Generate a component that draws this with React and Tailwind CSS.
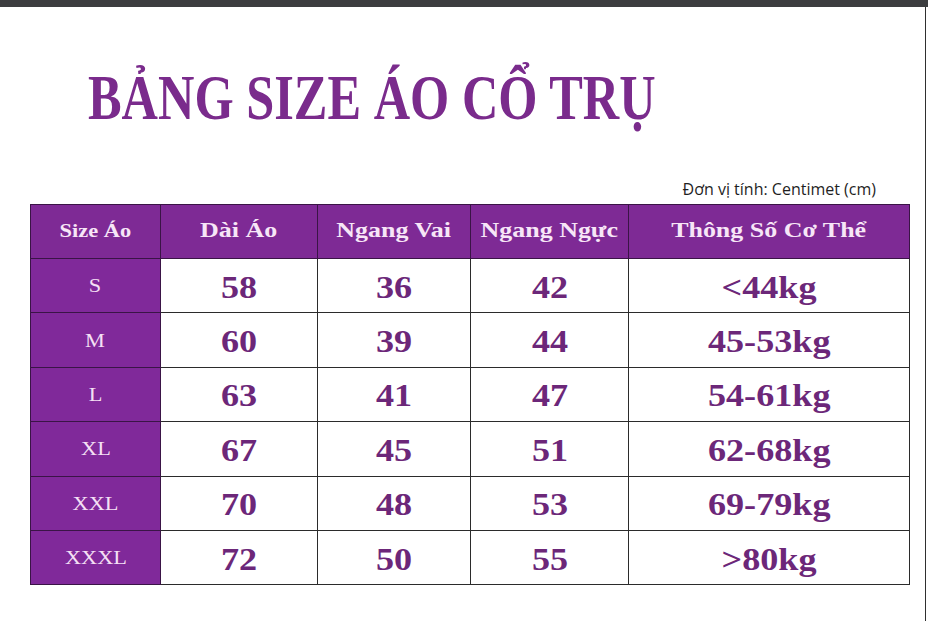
import React from "react";

const rows = [
  { size: "S", dai: "58", vai: "36", nguc: "42", body: "<44kg" },
  { size: "M", dai: "60", vai: "39", nguc: "44", body: "45-53kg" },
  { size: "L", dai: "63", vai: "41", nguc: "47", body: "54-61kg" },
  { size: "XL", dai: "67", vai: "45", nguc: "51", body: "62-68kg" },
  { size: "XXL", dai: "70", vai: "48", nguc: "53", body: "69-79kg" },
  { size: "XXXL", dai: "72", vai: "50", nguc: "55", body: ">80kg" },
];

const serif = { fontFamily: '"Liberation Serif", "Times New Roman", serif' };

function Head({ children, small }) {
  return (
    <th className="border border-[#3a1446] bg-[#7e2a95] p-0 text-center align-middle">
      <span
        className={`inline-block scale-x-[1.18] font-bold leading-none text-[#f7e6f7] ${small ? "text-[19px]" : "text-[22px]"}`}
      >
        {children}
      </span>
    </th>
  );
}

function Num({ children }) {
  return (
    <td className="border border-[#2b2b2b] bg-white p-0 pt-1 text-center align-middle">
      <span className="inline-block scale-x-[1.13] text-[32px] font-bold leading-none text-[#6c2779]">
        {children}
      </span>
    </td>
  );
}

export default function App() {
  return (
    <div className="min-h-[621px] bg-white" style={serif}>
      <div className="h-[7px] bg-[#3c3d3f]" />
      <div className="w-[926px] min-h-[614px] border-r border-[#2f2f2f]">
        {/* Title */}
        <div className="pl-[88px] pt-[60px]">
          <h1 className="inline-block origin-left scale-x-[0.8] whitespace-nowrap text-[63px] font-bold leading-none text-[#7a2b8c]">
            BẢNG SIZE ÁO CỔ TRỤ
          </h1>
        </div>

        {/* Unit */}
        <div className="mt-[49px] flex justify-end pr-[49px]">
          <span
            className="text-[16px] leading-5 text-[#1f1f1f]"
            style={{ fontFamily: '"Open Sans", "Noto Sans", sans-serif' }}
          >
            Đơn vị tính: Centimet (cm)
          </span>
        </div>

        {/* Table */}
        <table className="ml-[30px] mt-[5px] w-[879px] table-fixed border-collapse">
          <colgroup>
            <col className="w-[130px]" />
            <col className="w-[157px]" />
            <col className="w-[153px]" />
            <col className="w-[158px]" />
            <col className="w-[281px]" />
          </colgroup>
          <thead>
            <tr className="h-[54px]">
              <Head small>Size Áo</Head>
              <Head>Dài Áo</Head>
              <Head>Ngang Vai</Head>
              <Head>Ngang Ngực</Head>
              <Head>Thông Số Cơ Thể</Head>
            </tr>
          </thead>
          <tbody>
            {rows.map((r) => (
              <tr key={r.size} className="h-[54.4px]">
                <td className="border border-[#3a1446] bg-[#80299a] p-0 pt-[3px] text-center align-middle">
                  <span className="inline-block scale-x-[1.24] text-[18px] leading-none text-[#f5e0f5]">
                    {r.size}
                  </span>
                </td>
                <Num>{r.dai}</Num>
                <Num>{r.vai}</Num>
                <Num>{r.nguc}</Num>
                <Num>{r.body}</Num>
              </tr>
            ))}
          </tbody>
        </table>
      </div>
    </div>
  );
}
